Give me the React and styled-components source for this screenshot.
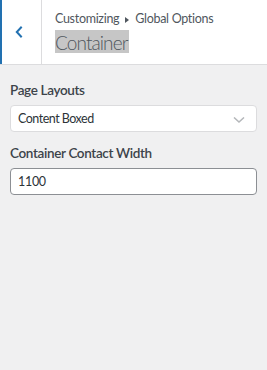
import React from 'react';
import styled, { createGlobalStyle } from 'styled-components';

const GlobalStyle = createGlobalStyle`
  html, body {
    margin: 0;
    padding: 0;
    background: #f0f0f1;
    font-family: Lato, "Noto Sans", sans-serif;
  }
  * { box-sizing: border-box; }
`;

const Panel = styled.div`
  width: 267px;
  min-height: 370px;
  background: #f0f0f1;
`;

const Header = styled.div`
  display: flex;
  height: 65px;
  background: #fff;
  border-bottom: 1px solid #dcdcde;
`;

const BackButton = styled.button`
  width: 42px;
  height: 64px;
  padding: 0 6px 0 0;
  margin: 0;
  background: #fff;
  border: none;
  border-left: 2px solid #2271b1;
  border-right: 1px solid #dcdcde;
  display: flex;
  align-items: center;
  justify-content: center;
  cursor: pointer;
`;

const TitleBlock = styled.div`
  padding: 9px 0 0 13px;
  color: #50575e;
`;

const Crumbs = styled.div`
  font-size: 12.5px;
  line-height: 20px;
  letter-spacing: -0.3px;
  display: flex;
  align-items: center;
  gap: 6px;
`;

const Arrow = styled.span`
  width: 0;
  height: 0;
  margin-top: 1px;
  border-top: 3px solid transparent;
  border-bottom: 3px solid transparent;
  border-left: 4px solid #50575e;
`;

const Title = styled.h3`
  margin: 1px 0 0;
  font-size: 19px;
  font-weight: 300;
  letter-spacing: -0.9px;
  line-height: 21px;
  color: #50575e;
`;

const Highlight = styled.span`
  display: inline-block;
  padding: 2px 1px 0 0;
  background: #c6c6c6;
`;

const Body = styled.div`
  padding: 15px 10px;
`;

const Field = styled.div`
  margin-bottom: 11px;
`;

const Label = styled.label`
  display: block;
  font-size: 13.5px;
  font-weight: 600;
  letter-spacing: -0.35px;
  line-height: 20px;
  color: #3c434a;
  margin-bottom: 5px;
`;

const Control = styled.div`
  position: relative;
  height: 27px;
  background: #fff;
  border: 1px solid ${p => (p.$strong ? '#8c8f94' : '#dcdcde')};
  border-radius: 4px;
  display: flex;
  align-items: center;
  padding: 0 7px;
  font-size: 12.5px;
  letter-spacing: ${p => (p.$strong ? '-0.3px' : '-0.5px')};
  color: #2c3338;
`;

const Chevron = styled.svg`
  position: absolute;
  right: 11px;
  top: 11px;
`;

export default function App() {
  return (
    <Panel>
      <GlobalStyle />
      <Header>
        <BackButton aria-label="Back">
          <svg width="8" height="12" viewBox="0 0 8 12">
            <path d="M6.7 0.8 L1.8 6 L6.7 11.2" fill="none" stroke="#2271b1" strokeWidth="2" />
          </svg>
        </BackButton>
        <TitleBlock>
          <Crumbs>
            Customizing <Arrow /> Global Options
          </Crumbs>
          <Title><Highlight>Container</Highlight></Title>
        </TitleBlock>
      </Header>
      <Body>
        <Field>
          <Label>Page Layouts</Label>
          <Control>
            Content Boxed
            <Chevron width="12" height="6" viewBox="0 0 12 6">
              <path d="M1 0.5 L6 5 L11 0.5" fill="none" stroke="#b4b7ba" strokeWidth="1.5" />
            </Chevron>
          </Control>
        </Field>
        <Field>
          <Label>Container Contact Width</Label>
          <Control $strong>1100</Control>
        </Field>
      </Body>
    </Panel>
  );
}
